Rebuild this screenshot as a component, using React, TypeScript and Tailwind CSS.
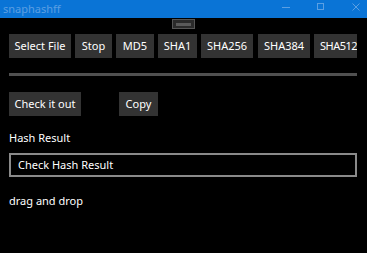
const hashButtons = [
  { label: "MD5", w: "w-[38px]" },
  { label: "SHA1", w: "w-[39px]" },
  { label: "SHA256", w: "w-[52px]" },
  { label: "SHA384", w: "w-[52px] ml-px" },
  { label: "SHA512", w: "w-[43px] justify-start pl-[6px] tracking-[-0.5px] text-[10px]" },
]

function Btn({ label, className }: { label: string; className: string }) {
  return (
    <div className={`h-[24px] shrink-0 bg-[#333333] text-white text-[11px] flex items-center justify-center whitespace-nowrap ${className}`}>
      {label}
    </div>
  )
}

export default function App() {
  return (
    <div className="w-[367px] h-[253px] bg-black overflow-hidden flex flex-col" style={{ fontFamily: '"Noto Sans", "Open Sans", sans-serif' }}>
      {/* title bar */}
      <header className="h-[18px] bg-[#0a74d6] flex items-center pl-[3px] relative shrink-0">
        <span className="text-[11px] leading-none text-[#5b9fe3] -mt-[2px]">snaphashff</span>
        <div className="absolute left-[282px] top-[7px] w-[8px] h-px bg-[#5b9fe3]" />
        <div className="absolute left-[317px] top-[3px] w-[7px] h-[7px] border border-[#5b9fe3]" />
        <svg className="absolute left-[352px] top-[3px]" width="8" height="8" viewBox="0 0 8 8">
          <path d="M0.5 0.5 L7.5 7.5 M7.5 0.5 L0.5 7.5" stroke="#5b9fe3" strokeWidth="1" />
        </svg>
      </header>

      {/* collapsed bar handle */}
      <div className="mt-px mx-auto w-[23px] h-[10px] border border-[#555555] bg-[#2a2a2a] flex items-center justify-center">
        <div className="w-[15px] h-[3px] bg-[#5a5a5a]" />
      </div>

      <main className="px-[9px] pr-[10px] flex flex-col">
        <div className="mt-[5px] flex gap-[4px] overflow-hidden">
          <Btn label="Select File" className="w-[62px]" />
          <Btn label="Stop" className="w-[37px]" />
          {hashButtons.map((b, index) => (
            <Btn key={index} label={b.label} className={b.w} />
          ))}
        </div>

        <div className="mt-[15px] h-[3px] bg-[#505050]" />

        <div className="mt-[16px] flex">
          <Btn label="Check it out" className="w-[72px]" />
          <Btn label="Copy" className="w-[39px] ml-[38px]" />
        </div>

        <p className="mt-[14px] text-[11px] leading-[15px] text-white">Hash Result</p>

        <div className="mt-[8px] h-[24px] border-2 border-[#8a8a8a] flex items-center pl-[7px] text-[11px] text-white">
          Check Hash Result
        </div>

        <p className="mt-[16px] text-[11px] leading-[15px] text-white">drag and drop</p>
      </main>
    </div>
  )
}
